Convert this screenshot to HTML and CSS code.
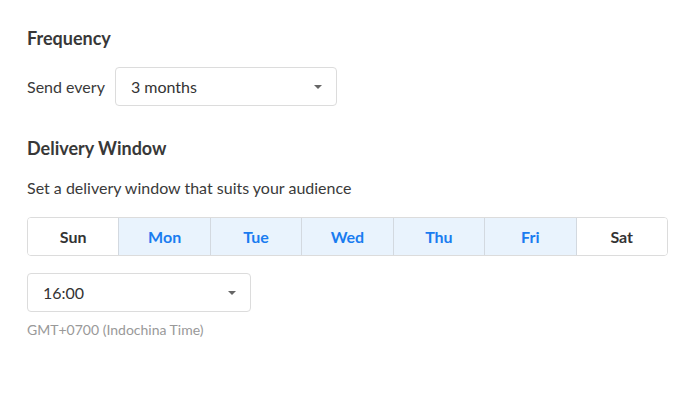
FILE: index.html
```html
<!DOCTYPE html>
<html lang="en">
<head>
  <meta charset="UTF-8">
  <title>Schedule</title>
  <link rel="stylesheet" href="styles.css">
</head>
<body>
  <div class="panel">
    <h2>Frequency</h2>
    <div class="freq-row">
      <span class="label">Send every</span>
      <div class="select freq-select">
        <span>3 months</span>
        <span class="caret"></span>
      </div>
    </div>

    <h2 class="section">Delivery Window</h2>
    <p class="hint">Set a delivery window that suits your audience</p>

    <div class="days">
      <button class="day">Sun</button>
      <button class="day active">Mon</button>
      <button class="day active">Tue</button>
      <button class="day active">Wed</button>
      <button class="day active">Thu</button>
      <button class="day active">Fri</button>
      <button class="day">Sat</button>
    </div>

    <div class="select time-select">
      <span>16:00</span>
      <span class="caret"></span>
    </div>
    <p class="tz">GMT+0700 (Indochina Time)</p>
  </div>
</body>
</html>
```

FILE: styles.css
```css
body {
  margin: 0;
  font-family: 'Lato', sans-serif;
  background: #ffffff;
  color: #3a3a3a;
}

.panel {
  padding: 26px 26px 0 27px;
}

h2 {
  margin: 0;
  font-size: 18px;
  line-height: 24px;
  font-weight: 700;
  color: #383838;
}

h2.section {
  margin-top: 30px;
}

.freq-row {
  display: flex;
  align-items: center;
  gap: 10px;
  margin-top: 17px;
}

.label {
  font-size: 16px;
  color: #3a3a3a;
}

.select {
  display: flex;
  align-items: center;
  justify-content: space-between;
  box-sizing: border-box;
  height: 39px;
  padding: 0 14px 0 15px;
  border: 1px solid #dcdcdc;
  border-radius: 4px;
  font-size: 16px;
  color: #333;
  background: #fff;
}

.freq-select {
  width: 222px;
}

.caret {
  width: 0;
  height: 0;
  border-left: 4px solid transparent;
  border-right: 4px solid transparent;
  border-top: 4px solid #666;
}

.hint {
  margin: 18px 0 0;
  font-size: 16px;
  line-height: 20px;
  color: #3a3a3a;
}

.days {
  display: flex;
  margin-top: 19px;
  height: 39px;
  box-sizing: border-box;
  border: 1px solid #dcdcdc;
  border-radius: 4px;
  overflow: hidden;
}

.day {
  flex: 1;
  border: none;
  border-left: 1px solid #d3d9e0;
  background: #fff;
  font-family: 'Lato', sans-serif;
  font-size: 16px;
  font-weight: 700;
  color: #333;
  padding: 0;
}

.day:first-child {
  border-left: none;
}

.day.active {
  background: #e9f3fd;
  color: #1a7cf0;
}

.time-select {
  width: 224px;
  margin-top: 17px;
}

.tz {
  margin: 9px 0 0;
  font-size: 14px;
  line-height: 18px;
  color: #999;
}
```
